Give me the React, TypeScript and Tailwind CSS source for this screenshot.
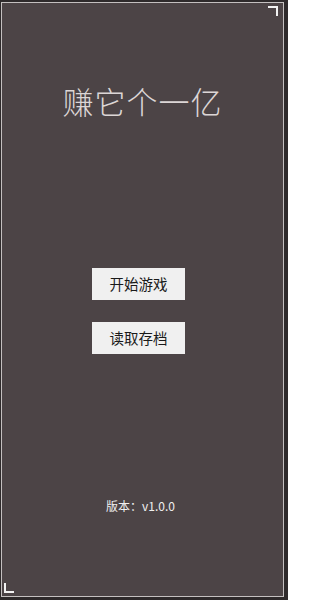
export default function App() {
  const font = { fontFamily: '"Noto Sans CJK SC", "Noto Sans", sans-serif' };

  return (
    <div className="w-[288px] h-[600px] bg-[#2e2a2b] pt-[2px] pl-[1px] pr-[4px] pb-[3px]" style={font}>
      <div className="relative h-full border border-[#c4c0c0] bg-[#4c4446] flex flex-col items-center">
        {/* corner marks */}
        <div className="absolute top-[3px] right-[5px] w-[10px] h-[10px] border-t-2 border-r-2 border-[#f2f2f2]" />
        <div className="absolute bottom-[3px] left-[2px] w-[10px] h-[10px] border-b-2 border-l-2 border-[#f2f2f2]" />

        <h1 className="mt-[78px] text-[31px] leading-[40px] font-light text-[#dcd6d6] tracking-[1px]">
          赚它个一亿
        </h1>

        <div className="mt-[147px] mr-[8px] flex flex-col gap-[22px]">
          <button className="w-[93px] h-[32px] bg-[#f0f0f0] text-[14.5px] text-[#1a1a1a]">
            开始游戏
          </button>
          <button className="w-[93px] h-[32px] bg-[#f0f0f0] text-[14.5px] text-[#1a1a1a]">
            读取存档
          </button>
        </div>

        <p className="mt-[144px] mr-[4px] text-[12px] leading-[16px] text-[#f0f0f0]">版本：v1.0.0</p>
      </div>
    </div>
  );
}
